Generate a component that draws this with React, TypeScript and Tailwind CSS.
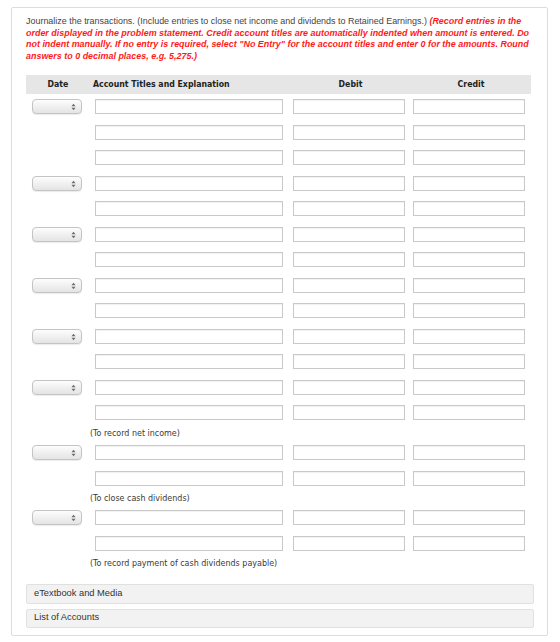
import React from "react";

const groups: { rows: number; note?: string }[] = [
  { rows: 3 },
  { rows: 2 },
  { rows: 2 },
  { rows: 2 },
  { rows: 2 },
  { rows: 2, note: "(To record net income)" },
  { rows: 2, note: "(To close cash dividends)" },
  { rows: 2, note: "(To record payment of cash dividends payable)" },
];

function DateSelect() {
  return (
    <div className="relative w-[50px] h-[15px] rounded-[4px] border border-[#c4c4c4] bg-gradient-to-b from-[#fdfdfd] to-[#e4e4e4] shadow-[0_1px_1px_rgba(0,0,0,0.08)]">
      <svg className="absolute right-[5px] top-[3px]" width="5" height="8" viewBox="0 0 5 8">
        <path d="M0.5 3.2 L2.5 0.8 L4.5 3.2 Z" fill="#6b6b6b" />
        <path d="M0.5 4.8 L2.5 7.2 L4.5 4.8 Z" fill="#6b6b6b" />
      </svg>
    </div>
  );
}

function Field({ w }: { w: string }) {
  return (
    <div
      className={`${w} h-[15px] border border-[#c9c9c9] bg-white shadow-[inset_0_1px_1px_rgba(0,0,0,0.06)]`}
    />
  );
}

export default function App() {
  return (
    <div className="pl-[11px] pt-[7px] bg-white min-h-[642px]">
      <div
        className="w-[537px] h-[629px] border border-[#dcdcdc] rounded-[2px] bg-white pl-[14px] pr-[14px] pt-[8px] text-[#333]"
        style={{ fontFamily: '"Liberation Sans", Arial, sans-serif' }}
      >
        <p className="text-[8.95px] leading-[11.67px] text-[#444]">
          Journalize the transactions. (Include entries to close net income and dividends to Retained Earnings.){" "}
          <span className="text-[#ff1a1a] font-bold italic">
            (Record entries in the order displayed in the problem statement. Credit account titles are automatically
            indented when amount is entered. Do not indent manually. If no entry is required, select "No Entry" for the
            account titles and enter 0 for the amounts. Round answers to 0 decimal places, e.g. 5,275.)
          </span>
        </p>

        <div className="mt-[12.4px] w-[505px]" style={{ fontFamily: '"DejaVu Sans Condensed", "DejaVu Sans", Verdana, sans-serif' }}>
          {/* header */}
          <div className="flex items-center h-[19px] bg-[#e6e6e6] text-[8.7px] font-bold text-[#222]">
            <div className="w-[64px] text-center">Date</div>
            <div className="w-[203px] pl-[3px]">Account Titles and Explanation</div>
            <div className="w-[115px] text-center">Debit</div>
            <div className="w-[123px] text-center pl-[3px]">Credit</div>
          </div>

          {groups.map((g, gi) => (
            <div key={gi}>
              {Array.from({ length: g.rows }).map((_, ri) => (
                <div key={ri} className="flex items-center h-[25.5px]">
                  <div className="w-[56px] pl-[6px]">{ri === 0 && <DateSelect />}</div>
                  <div className="ml-[13px]">
                    <Field w="w-[188px]" />
                  </div>
                  <div className="ml-[10px]">
                    <Field w="w-[112px]" />
                  </div>
                  <div className="ml-[8px]">
                    <Field w="w-[112px]" />
                  </div>
                </div>
              ))}
              {g.note && (
                <div className="h-[14.2px] leading-[14.2px] pl-[64px] text-[8.9px] text-[#3a3a3a]">{g.note}</div>
              )}
            </div>
          ))}
        </div>

        <div className="mt-[13.5px] flex flex-col gap-[5px] w-[508px] text-[9.3px] text-[#333]">
          <div className="h-[20px] flex items-center px-[7px] bg-[#f2f2f2] border border-[#e0e0e0] rounded-[2px]">
            eTextbook and Media
          </div>
          <div className="h-[19.5px] flex items-center px-[7px] bg-[#f2f2f2] border border-[#e0e0e0] rounded-[2px]">
            List of Accounts
          </div>
        </div>
      </div>
    </div>
  );
}
